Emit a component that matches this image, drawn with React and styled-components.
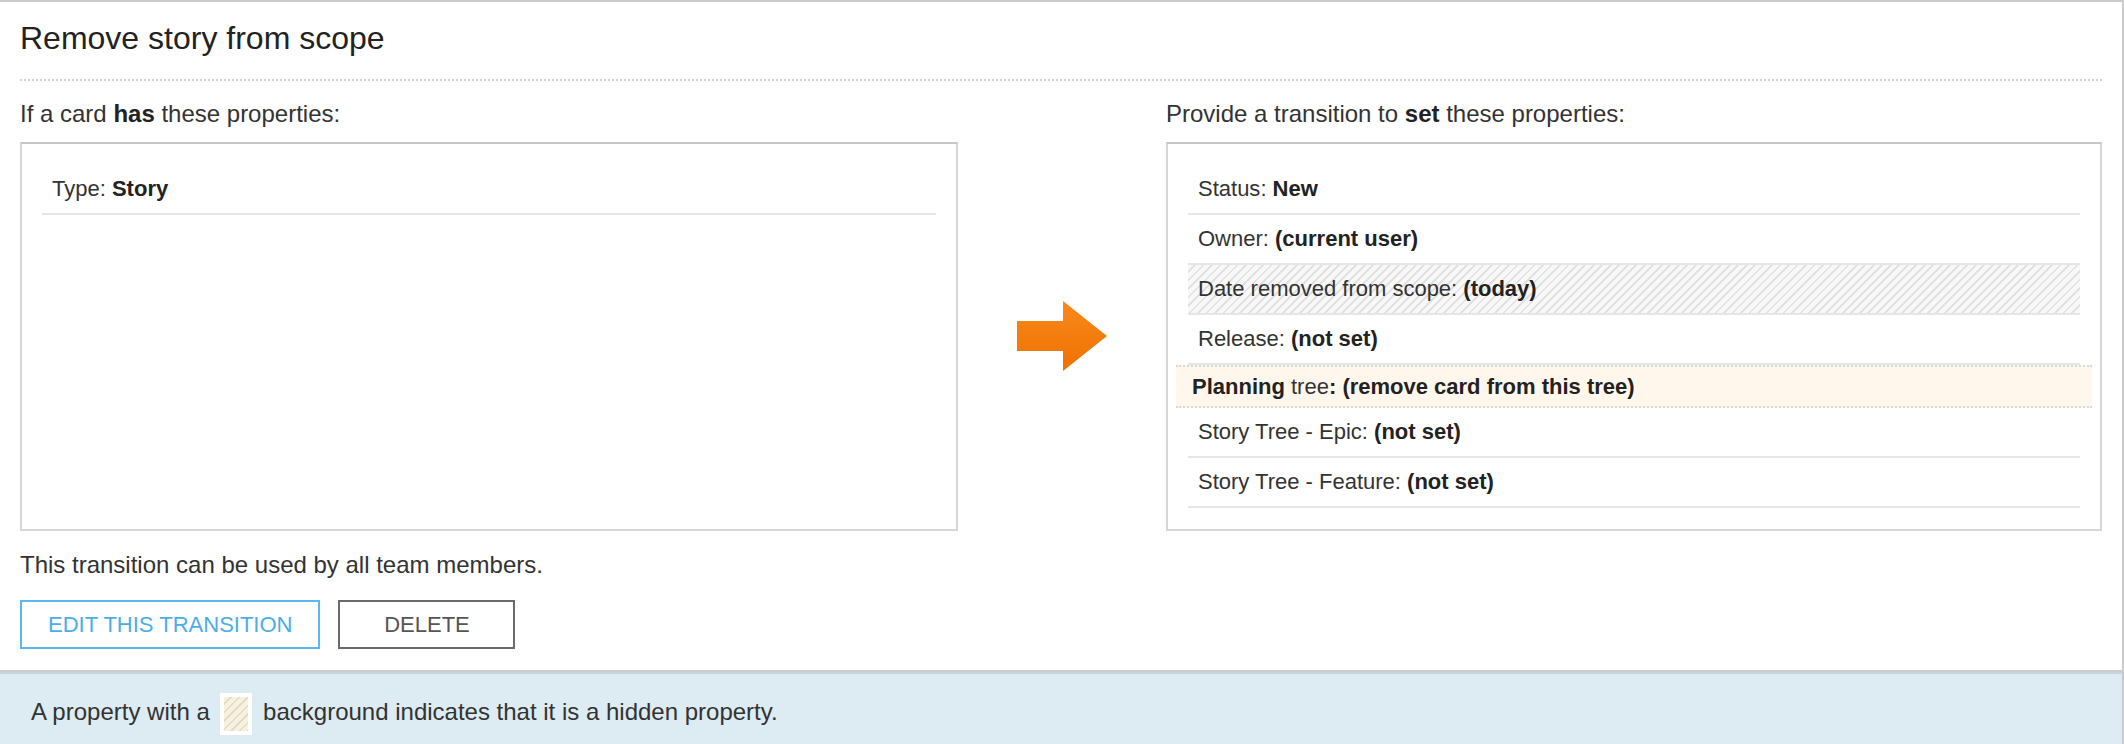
import React from 'react';
import styled, { createGlobalStyle } from 'styled-components';

const GlobalStyle = createGlobalStyle`
  body {
    margin: 0;
    background: #fff;
    color: #333;
    font-family: "Liberation Sans", Arial, sans-serif;
  }
`;

const conditions = [{ label: 'Type', value: 'Story' }];

const actions = [
  { label: 'Status', value: 'New' },
  { label: 'Owner', value: '(current user)' },
  { label: 'Date removed from scope', value: '(today)', hidden: true },
  { label: 'Release', value: '(not set)' },
  { tree: 'Planning', value: '(remove card from this tree)' },
  { label: 'Story Tree - Epic', value: '(not set)' },
  { label: 'Story Tree - Feature', value: '(not set)' },
];

function Arrow() {
  return (
    <svg width="91" height="71" viewBox="0 0 91 71">
      <defs>
        <linearGradient id="arrowFill" x1="0" y1="0" x2="0" y2="1">
          <stop offset="0" stopColor="#f98a1c" />
          <stop offset="1" stopColor="#ef7000" />
        </linearGradient>
      </defs>
      <polygon points="0,20 46,20 46,0 90,35 46,70 46,50 0,50" fill="url(#arrowFill)" />
    </svg>
  );
}

function PropertyRow({ item }) {
  if (item.tree) {
    return (
      <TreeRow>
        <b>{item.tree}</b> tree<b>: {item.value}</b>
      </TreeRow>
    );
  }
  return (
    <Row $hidden={item.hidden}>
      {item.label}: <b>{item.value}</b>
    </Row>
  );
}

export default function App() {
  return (
    <Page>
      <GlobalStyle />
      <Panel>
        <Header>
          <Title>Remove story from scope</Title>
        </Header>
        <Rule>
          <Label style={{ gridColumn: 1 }}>
            If a card <b>has</b> these properties:
          </Label>
          <Label style={{ gridColumn: 3 }}>
            Provide a transition to <b>set</b> these properties:
          </Label>
          <Box>
            {conditions.map(x => (
              <PropertyRow key={x.label} item={x} />
            ))}
          </Box>
          <ArrowCell>
            <Arrow />
          </ArrowCell>
          <Box>
            {actions.map(x => (
              <PropertyRow key={x.label || x.tree} item={x} />
            ))}
          </Box>
        </Rule>
        <Note>This transition can be used by all team members.</Note>
        <Actions>
          <Button $tone="primary">EDIT THIS TRANSITION</Button>
          <Button>DELETE</Button>
        </Actions>
      </Panel>
      <Footer>
        A property with a <Swatch /> background indicates that it is a hidden property.
      </Footer>
    </Page>
  );
}

const Page = styled.div`
  border-top: 2px solid #cacaca;
  border-right: 2px solid #cacaca;
`;

const Panel = styled.div`
  padding: 0 20px 21px 20px;
  border-bottom: 2px solid #cccccc;
`;

const Header = styled.div`
  padding: 16px 0 21px;
  border-bottom: 2px dotted #d2d2d2;
`;

const Title = styled.h1`
  margin: 0;
  font-size: 32px;
  font-weight: 400;
  line-height: 40px;
  color: #222;
`;

const Rule = styled.div`
  margin-top: 18px;
  display: grid;
  grid-template-columns: 938px 1fr 936px;
  row-gap: 13px;
`;

const Label = styled.div`
  font-size: 24px;
  line-height: 30px;
  color: #333;

  b {
    color: #222;
  }
`;

const Box = styled.div`
  box-sizing: border-box;
  height: 389px;
  padding: 21px 20px 0;
  border: 2px solid #d6d6d6;
  border-top-color: #c6c6c6;
`;

const ArrowCell = styled.div`
  display: flex;
  align-items: center;
  justify-content: center;
`;

const Row = styled.div`
  padding: 0 10px;
  font-size: 22px;
  line-height: 48px;
  color: #333;
  border-bottom: 2px solid #e6e6e6;
  background: ${props =>
    props.$hidden
      ? 'repeating-linear-gradient(135deg, #f8f8f8 0 4px, #e2e2e2 4px 6px)'
      : 'transparent'};

  b {
    color: #222;
  }
`;

const TreeRow = styled.div`
  margin: 0 -12px;
  padding: 0 16px;
  font-size: 22px;
  line-height: 39px;
  color: #333;
  background: #fff7ec;
  border-top: 2px dotted #d8d8d8;
  border-bottom: 2px dotted #d8d8d8;

  b {
    color: #222;
  }
`;

const Note = styled.div`
  margin-top: 19px;
  font-size: 24px;
  line-height: 30px;
  color: #333;
`;

const Actions = styled.div`
  margin-top: 20px;
  display: flex;
  gap: 18px;
`;

const Button = styled.button`
  box-sizing: border-box;
  height: 49px;
  min-width: 177px;
  padding: 0 26px;
  background: #fff;
  font-family: inherit;
  font-size: 22px;
  border: 2px solid ${props => (props.$tone === 'primary' ? '#5cb6ef' : '#6a6a6a')};
  color: ${props => (props.$tone === 'primary' ? '#4badea' : '#555')};
  cursor: pointer;
`;

const Footer = styled.div`
  padding: 19px 31px;
  font-size: 24px;
  line-height: 30px;
  color: #333;
  background: #ddebf2;
  border-top: 2px solid #c5d5de;
  border-bottom: 2px solid #c5d5de;
`;

const Swatch = styled.span`
  display: inline-block;
  box-sizing: border-box;
  width: 32px;
  height: 42px;
  margin: 0 4px;
  vertical-align: middle;
  border: 4px solid #fff;
  background: repeating-linear-gradient(135deg, #f6f1e2 0 4px, #e6dcc0 4px 6px);
`;
